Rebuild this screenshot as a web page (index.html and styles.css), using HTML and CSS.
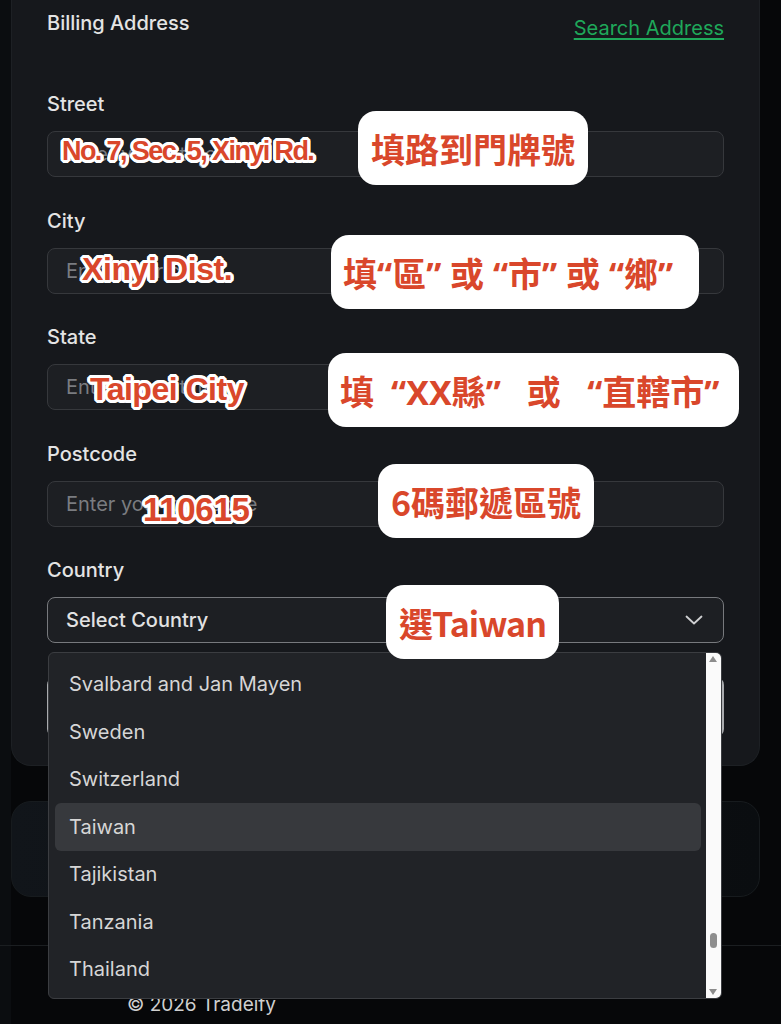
FILE: index.html
```html
<!DOCTYPE html>
<html lang="zh-Hant">
<head>
    <meta charset="UTF-8">
    <title>Billing Address</title>
    <link rel="stylesheet" href="styles.css">
</head>
<body>
    <div class="page">
        <section class="card">
            <div class="card-head">
                <h2>Billing Address</h2>
                <a href="#" class="search-link">Search Address</a>
            </div>

            <form class="fields">
                <div class="field">
                    <label for="street">Street</label>
                    <input type="text" id="street" placeholder="Enter your street">
                </div>
                <div class="field">
                    <label for="city">City</label>
                    <input type="text" id="city" placeholder="Enter your city">
                </div>
                <div class="field">
                    <label for="state">State</label>
                    <input type="text" id="state" placeholder="Enter your state">
                </div>
                <div class="field">
                    <label for="postcode">Postcode</label>
                    <input type="text" id="postcode" placeholder="Enter your postcode">
                </div>
                <div class="field">
                    <label>Country</label>
                    <div class="select">
                        <span>Select Country</span>
                        <svg class="chevron" width="18" height="10" viewBox="0 0 18 10">
                            <polyline points="1.5,1.5 9,8.5 16.5,1.5" fill="none" stroke="#cfd0d2" stroke-width="1.8" stroke-linecap="round" stroke-linejoin="round"/>
                        </svg>
                    </div>
                </div>
                <button type="button" class="submit">Continue</button>
            </form>
        </section>

        <section class="card card-muted"></section>

        <footer class="footer">© 2026 Tradeify</footer>

        <!-- open country list -->
        <div class="options">
            <ul class="option-list">
                <li>Svalbard and Jan Mayen</li>
                <li>Sweden</li>
                <li>Switzerland</li>
                <li class="active">Taiwan</li>
                <li>Tajikistan</li>
                <li>Tanzania</li>
                <li>Thailand</li>
            </ul>
            <div class="scrollbar">
                <span class="arrow up"></span>
                <span class="thumb"></span>
                <span class="arrow down"></span>
            </div>
        </div>

        <!-- notes on top of the form -->
        <span class="note note-street">No. 7, Sec. 5, Xinyi Rd.</span>
        <span class="note note-city">Xinyi Dist.</span>
        <span class="note note-state">Taipei City</span>
        <span class="note note-post">110615</span>

        <div class="bubble bubble-street">填路到門牌號</div>
        <div class="bubble bubble-city">填“區” 或 “市” 或 “鄉”</div>
        <div class="bubble bubble-state">填&ensp;“XX縣”&ensp; 或&nbsp;&nbsp; “直轄市”</div>
        <div class="bubble bubble-post">6碼郵遞區號</div>
        <div class="bubble bubble-country">選Taiwan</div>
    </div>
</body>
</html>
```

FILE: styles.css
```css
body {
    margin: 0;
    background-color: #060709;
    font-family: 'Inter', 'Noto Sans', sans-serif;
    color: #e6e6e6;
}

.page {
    position: relative;
    width: 781px;
    height: 1024px;
    overflow: hidden;
    background: linear-gradient(to right, #0b0d10 0, #0b0d10 11px, #060709 11px);
}

.card {
    width: 749px;
    margin-left: 11px;
    box-sizing: border-box;
    background-color: #16181c;
    border: 1px solid #1d2024;
    border-top: none;
    border-radius: 0 0 20px 20px;
    margin-top: -20px;
    padding: 31px 35px 28px;
}

.card-head {
    display: flex;
    justify-content: space-between;
    align-items: flex-start;
}

.card-head h2 {
    margin: 0;
    font-size: 20px;
    line-height: 24px;
    font-weight: 500;
    color: #e4e4e4;
}

.search-link {
    margin-top: 5px;
    font-size: 20px;
    line-height: 24px;
    color: #1fa85a;
    text-decoration: underline;
    text-underline-offset: 3px;
}

.fields {
    display: flex;
    flex-direction: column;
    gap: 31.5px;
    margin-top: 52px;
}

.field {
    display: flex;
    flex-direction: column;
}

.field label {
    font-size: 20px;
    line-height: 24px;
    font-weight: 500;
    color: #e4e4e4;
    margin-bottom: 15px;
}

.field input {
    height: 46px;
    box-sizing: border-box;
    padding: 0 18px;
    border: 1px solid #36383c;
    border-radius: 8px;
    background-color: #1d1f23;
    color: #e4e4e4;
    font-family: inherit;
    font-size: 20px;
    outline: none;
}

.field input::placeholder {
    color: #7a7c80;
}

.select {
    height: 46px;
    box-sizing: border-box;
    display: flex;
    align-items: center;
    justify-content: space-between;
    padding: 0 20px 0 18px;
    border: 1px solid #77797d;
    border-radius: 8px;
    background-color: #1d1f23;
    font-size: 20px;
    font-weight: 500;
    color: #e2e2e2;
}

.submit {
    margin-top: 2.5px;
    height: 60px;
    border: 2px solid #a9abae;
    border-radius: 8px;
    background-color: #202226;
}

.card-muted {
    margin-top: 35px;
    height: 96px;
    border: 1px solid #171b1e;
    border-radius: 20px;
    background: linear-gradient(to right, #11151a, #0a0d10);
}

.footer {
    margin-top: 48px;
    border-top: 1px solid #1b1e21;
    padding: 47px 0 0 127px;
    font-size: 19px;
    line-height: 24px;
    color: #cfcfcf;
}

/* dropdown list */
.options {
    position: absolute;
    left: 48px;
    top: 652px;
    width: 674px;
    height: 347px;
    box-sizing: border-box;
    display: flex;
    border: 1px solid #3b3d41;
    border-radius: 6px;
    background-color: #212327;
    overflow: hidden;
}

.option-list {
    flex: 1;
    list-style: none;
    margin: 0;
    padding: 7.5px 5px 0 6px;
}

.option-list li {
    height: 47.5px;
    display: flex;
    align-items: center;
    padding-left: 14px;
    border-radius: 6px;
    font-size: 20px;
    color: #d6d6d6;
}

.option-list li.active {
    background-color: #37393d;
}

.scrollbar {
    position: relative;
    width: 15px;
    background-color: #fafafa;
}

.arrow {
    position: absolute;
    left: 3px;
    width: 0;
    height: 0;
    border-left: 4.5px solid transparent;
    border-right: 4.5px solid transparent;
}

.arrow.up {
    top: 3px;
    border-bottom: 6px solid #8c8c8c;
}

.arrow.down {
    bottom: 3px;
    border-top: 6px solid #8c8c8c;
}

.thumb {
    position: absolute;
    left: 4px;
    top: 280px;
    width: 7px;
    height: 15px;
    border-radius: 4px;
    background-color: #8e8e8e;
}

/* red notes with white outline */
.note {
    position: absolute;
    font-family: 'Liberation Sans', Arial, sans-serif;
    font-weight: bold;
    line-height: 1;
    color: #d9472b;
    white-space: nowrap;
    text-shadow:
        3px 0 #fff, -3px 0 #fff, 0 3px #fff, 0 -3px #fff,
        2px 2px #fff, -2px 2px #fff, 2px -2px #fff, -2px -2px #fff,
        3px 1px #fff, -3px 1px #fff, 3px -1px #fff, -3px -1px #fff,
        1px 3px #fff, -1px 3px #fff, 1px -3px #fff, -1px -3px #fff;
}

.note-street {
    left: 62px;
    top: 138px;
    font-size: 27px;
    letter-spacing: -1.6px;
}

.note-city {
    left: 82px;
    top: 253px;
    font-size: 32px;
    letter-spacing: -0.4px;
}

.note-state {
    left: 90px;
    top: 373px;
    font-size: 32px;
    letter-spacing: -0.5px;
}

.note-post {
    left: 143px;
    top: 493px;
    font-size: 33px;
    letter-spacing: -0.3px;
}

.bubble {
    position: absolute;
    height: 74px;
    box-sizing: border-box;
    display: flex;
    align-items: center;
    padding: 0 13px;
    border-radius: 18px;
    background-color: #ffffff;
    font-family: 'Noto Sans CJK TC', 'Noto Sans', sans-serif;
    font-size: 34px;
    font-weight: bold;
    color: #d9472b;
    white-space: nowrap;
}

/* Latin quotes and spaces in these two, CJK for the rest */
.bubble-city,
.bubble-state {
    font-family: 'Noto Sans', 'Noto Sans CJK TC', sans-serif;
}

.bubble-street { left: 358px; top: 111px; }
.bubble-city { left: 331px; top: 235px; padding: 0 26px 0 12px; }
.bubble-state { left: 328px; top: 353px; padding: 0 20px 0 12px; }
.bubble-post { left: 378px; top: 464px; }
.bubble-country { left: 386px; top: 585px; letter-spacing: -1px; }
```
